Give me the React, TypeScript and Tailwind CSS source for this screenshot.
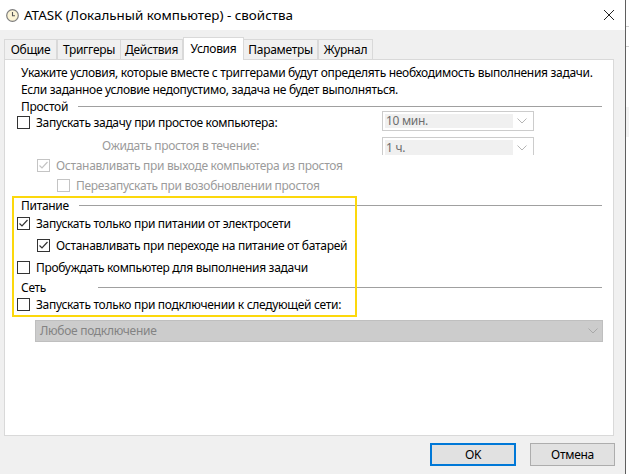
import React from "react";

const font = { fontFamily: '"Noto Sans", "Open Sans", sans-serif' };

function Check({ checked, disabled }: { checked?: boolean; disabled?: boolean }) {
  const c = disabled ? "#c4c4c4" : "#333333";
  return (
    <div
      className={`w-[13px] h-[13px] shrink-0 border bg-white flex items-center justify-center ${disabled ? "border-[#c4c4c4]" : "border-[#333333]"}`}
    >
      {checked && (
        <svg width="11" height="11" viewBox="0 0 11 11">
          <polyline points="1.5,5.5 4,8 9.5,2" fill="none" stroke={c} strokeWidth="1.2" />
        </svg>
      )}
    </div>
  );
}

function Chevron({ color }: { color: string }) {
  return (
    <svg width="10" height="6" viewBox="0 0 10 6">
      <polyline points="0.5,0.5 5,5 9.5,0.5" fill="none" stroke={color} strokeWidth="1" />
    </svg>
  );
}

function Row({
  level,
  checked,
  disabled,
  label,
  h,
  children,
}: {
  level: number;
  checked?: boolean;
  disabled?: boolean;
  label: string;
  h: string;
  children?: React.ReactNode;
}) {
  const pl = level === 0 ? "pl-[12px]" : level === 1 ? "pl-[32px]" : "pl-[52px]";
  return (
    <div className={`flex items-center shrink-0 ${h} ${pl}`}>
      <Check checked={checked} disabled={disabled} />
      <span className={`ml-[6px] whitespace-nowrap leading-[15px] ${disabled ? "text-[#9b9b9b]" : "text-black"}`}>{label}</span>
      {children}
    </div>
  );
}

function Section({ label, w }: { label: string; w: string }) {
  return (
    <div className="flex items-center h-full pl-[16px] pr-[11px]">
      <span className={`${w} shrink-0 whitespace-nowrap leading-[13px]`}>{label}</span>
      <div className="flex-1 h-px bg-[#a0a0a0]" />
    </div>
  );
}

function SmallCombo({ text, h }: { text: string; h: string }) {
  return (
    <div className={`w-[152px] ${h} border border-[#cccccc] bg-white p-[2px] flex`}>
      <div className="flex-1 bg-[#f0f0f0] text-[#6d6d6d] pl-[1px] flex items-center leading-none">{text}</div>
      <div className="w-[18px] flex items-center justify-center">
        <Chevron color="#b5b5b5" />
      </div>
    </div>
  );
}

export default function App() {
  const tabs = ["Общие", "Триггеры", "Действия", "Условия", "Параметры", "Журнал"];
  const widths = ["w-[53px]", "w-[64px]", "w-[62px]", "w-[61px]", "w-[74px]", "w-[55px]"];
  return (
    <div className="w-[629px] h-[474px] flex overflow-hidden bg-white text-[12px] text-black tracking-[-0.3px]" style={font}>
      <div className="w-[625px] h-full bg-[#f0f0f0] flex flex-col relative">
        {/* title bar */}
        <div className="h-[30px] bg-white flex items-center shrink-0">
          <div className="ml-[6px] w-[13px] h-[13px]">
            <svg width="13" height="13" viewBox="0 0 13 13">
              <circle cx="6.5" cy="6.5" r="5.8" fill="#fbf3d5" stroke="#7d7d7d" strokeWidth="1.2" />
              <polyline points="6.5,3 6.5,6.8 9,6.8" fill="none" stroke="#555" strokeWidth="1.1" />
            </svg>
          </div>
          <span className="ml-[5px] whitespace-nowrap text-[13.4px] tracking-normal">ATASK (Локальный компьютер) - свойства</span>
          <div className="ml-auto mr-[10px] w-[12px] h-[12px]">
            <svg width="12" height="12" viewBox="0 0 12 12">
              <path d="M1 1 L11 11 M11 1 L1 11" stroke="#222" strokeWidth="1" />
            </svg>
          </div>
        </div>

        {/* tabs */}
        <div className="h-[29px] pl-[4px] flex items-end shrink-0 relative z-10">
          {tabs.map((t, i) =>
            i === 3 ? (
              <div
                key={t}
                className={`${widths[i]} h-[23px] -mb-px bg-white border border-b-0 border-[#d9d9d9] flex items-start justify-center pt-[2px]`}
              >
                {t}
              </div>
            ) : (
              <div
                key={t}
                className={`${widths[i]} h-[20px] bg-[#f0f0f0] border border-b-0 border-[#d9d9d9] flex items-center justify-center ${i === 4 || i === 2 ? "border-l-0" : ""}`}
              >
                {t}
              </div>
            )
          )}
        </div>

        {/* panel */}
        <div className="ml-[4px] w-[610px] h-[377px] bg-white border border-[#d9d9d9] shrink-0 flex flex-col">
          <div className="pl-[16px] pt-[4px] leading-[17px] whitespace-nowrap shrink-0">
            <div>Укажите условия, которые вместе с триггерами будут определять необходимость выполнения задачи.</div>
            <div>Если заданное условие недопустимо, задача не будет выполняться.</div>
          </div>
          <div className="h-[16px] shrink-0">
            <Section label="Простой" w="w-[57px]" />
          </div>
          <Row level={0} label="Запускать задачу при простое компьютера:" h="h-[17px]">
            <div className="ml-auto mr-[79px] self-end">
              <SmallCombo text="10 мин." h="h-[20px]" />
            </div>
          </Row>
          <div className="h-[20px] mt-[4px] flex items-center shrink-0">
            <span className="ml-[97px] text-[#9b9b9b] leading-[15px]">Ожидать простоя в течение:</span>
            <div className="ml-auto mr-[79px] self-end">
              <SmallCombo text="1 ч." h="h-[18px] border-b-0 pb-0" />
            </div>
          </div>
          <Row level={1} checked disabled label="Останавливать при выходе компьютера из простоя" h="h-[20px]" />
          <Row level={2} disabled label="Перезапускать при возобновлении простоя" h="h-[20px]" />
          <div className="h-[14px] mt-[3px] shrink-0">
            <Section label="Питание" w="w-[58px]" />
          </div>
          <Row level={0} checked label="Запускать только при питании от электросети" h="h-[22px]" />
          <Row level={1} checked label="Останавливать при переходе на питание от батарей" h="h-[22px]" />
          <Row level={0} label="Пробуждать компьютер для выполнения задачи" h="h-[22px]" />
          <div className="h-[18px] shrink-0">
            <Section label="Сеть" w="w-[77px]" />
          </div>
          <Row level={0} label="Запускать только при подключении к следующей сети:" h="h-[16px]" />
          <div className="mt-[8px] ml-[30px] w-[568px] h-[22px] shrink-0 bg-[#cccccc] border border-[#bfbfbf] flex items-center pl-[4px] text-[#838383]">
            <span className="flex-1">Любое подключение</span>
            <div className="w-[18px] flex items-center justify-center">
              <Chevron color="#a8a8a8" />
            </div>
          </div>
        </div>

        {/* buttons */}
        <div className="flex justify-end gap-[14px] pr-[10px] pt-[7px]">
          <button className="w-[86px] h-[23px] bg-[#e1e1e1] border-2 border-[#0078d7] flex items-center justify-center">OK</button>
          <button className="w-[85px] h-[23px] bg-[#e1e1e1] border border-[#adadad] flex items-center justify-center">Отмена</button>
        </div>

        {/* annotation highlight */}
        <div className="absolute left-[12px] top-[196px] w-[345px] h-[121px] border-2 border-[#fcd80c] pointer-events-none" />
      </div>
      <div className="w-px h-full bg-[#5f5f5f]" />
      <div className="flex-1 h-full bg-white flex flex-col">
        <div className="h-[27px] border-b border-[#cfcfcf]" />
        <div className="h-[20px] border-b border-[#cfcfcf]" />
        <div className="h-[60px]" />
        <div className="h-[30px] bg-[#f3f3f3]" />
      </div>
    </div>
  );
}
